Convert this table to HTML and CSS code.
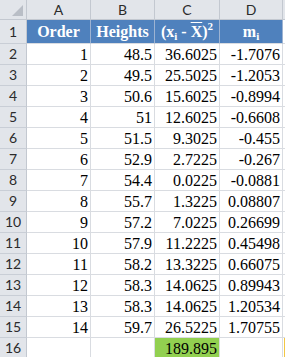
FILE: index.html
```html
<!DOCTYPE html>
<html lang="en">
<head>
    <meta charset="UTF-8">
    <title>Heights</title>
    <link rel="stylesheet" href="styles.css">
</head>
<body>
    <table class="sheet">
        <colgroup>
            <col class="c-row">
            <col class="c-a">
            <col class="c-b">
            <col class="c-c">
            <col class="c-d">
            <col class="c-e">
        </colgroup>
        <tr class="letters">
            <th class="corner"><span class="tri"></span></th>
            <th>A</th><th>B</th><th>C</th><th>D</th><th class="edge"></th>
        </tr>
        <tr class="head">
            <th class="num">1</th>
            <td>Order</td>
            <td>Heights</td>
            <td>(x<sub>i</sub> - <span class="bar">X</span>)<sup>2</sup></td>
            <td>m<sub>i</sub></td>
            <td class="edge"></td>
        </tr>
        <tr><th class="num">2</th><td>1</td><td>48.5</td><td>36.6025</td><td>-1.7076</td><td class="edge"></td></tr>
        <tr><th class="num">3</th><td>2</td><td>49.5</td><td>25.5025</td><td>-1.2053</td><td class="edge"></td></tr>
        <tr><th class="num">4</th><td>3</td><td>50.6</td><td>15.6025</td><td>-0.8994</td><td class="edge"></td></tr>
        <tr><th class="num">5</th><td>4</td><td>51</td><td>12.6025</td><td>-0.6608</td><td class="edge"></td></tr>
        <tr><th class="num">6</th><td>5</td><td>51.5</td><td>9.3025</td><td>-0.455</td><td class="edge"></td></tr>
        <tr><th class="num">7</th><td>6</td><td>52.9</td><td>2.7225</td><td>-0.267</td><td class="edge"></td></tr>
        <tr><th class="num">8</th><td>7</td><td>54.4</td><td>0.0225</td><td>-0.0881</td><td class="edge"></td></tr>
        <tr><th class="num">9</th><td>8</td><td>55.7</td><td>1.3225</td><td>0.08807</td><td class="edge"></td></tr>
        <tr><th class="num">10</th><td>9</td><td>57.2</td><td>7.0225</td><td>0.26699</td><td class="edge"></td></tr>
        <tr><th class="num">11</th><td>10</td><td>57.9</td><td>11.2225</td><td>0.45498</td><td class="edge"></td></tr>
        <tr><th class="num">12</th><td>11</td><td>58.2</td><td>13.3225</td><td>0.66075</td><td class="edge"></td></tr>
        <tr><th class="num">13</th><td>12</td><td>58.3</td><td>14.0625</td><td>0.89943</td><td class="edge"></td></tr>
        <tr><th class="num">14</th><td>13</td><td>58.3</td><td>14.0625</td><td>1.20534</td><td class="edge"></td></tr>
        <tr><th class="num">15</th><td>14</td><td>59.7</td><td>26.5225</td><td>1.70755</td><td class="edge"></td></tr>
        <tr><th class="num">16</th><td></td><td></td><td class="total">189.895</td><td></td><td class="edge picked"></td></tr>
    </table>
</body>
</html>
```

FILE: styles.css
```css
body {
    margin: 0;
    background: #ffffff;
    overflow: hidden;
}

.sheet {
    table-layout: fixed;
    border-collapse: separate;
    border-spacing: 0;
    width: 285px;
    font-family: "Liberation Serif", "Times New Roman", serif;
    font-size: 16px;
    color: #000000;
}

.c-row { width: 27px; }
.c-a { width: 64px; }
.c-b { width: 64px; }
.c-c { width: 65px; }
.c-d { width: 63px; }
.c-e { width: 2px; }

.sheet th,
.sheet td {
    box-sizing: border-box;
    padding: 0 2px 0 0;
    border-right: 1px solid #d9dce1;
    border-bottom: 1px solid #d9dce1;
    height: 21px;
    text-align: right;
    white-space: nowrap;
    overflow: hidden;
    line-height: 18px;
    vertical-align: bottom;
}

/* column letters and row numbers */
.letters th {
    height: 20px;
    background: #e2e5ea;
    font-family: Lato, "Liberation Sans", sans-serif;
    font-weight: normal;
    font-size: 14px;
    color: #2b2b2b;
    text-align: center;
    padding: 0;
    vertical-align: middle;
    border-right: 1px solid #c3c8d0;
    border-bottom: 1px solid #c3c8d0;
}

.sheet .num {
    background: #e2e5ea;
    font-family: Lato, "Liberation Sans", sans-serif;
    font-weight: normal;
    font-size: 14px;
    color: #2b2b2b;
    text-align: center;
    padding: 0;
    vertical-align: middle;
    border-right: 1px solid #c3c8d0;
    border-bottom: 1px solid #c9ced6;
}

.corner {
    position: relative;
}

.tri {
    position: absolute;
    right: 3px;
    bottom: 3px;
    width: 11px;
    height: 11px;
    background: #b9bec6;
    clip-path: polygon(100% 0, 100% 100%, 0 100%);
}

/* blue title row */
.head td {
    height: 24px;
    background: #4f81bd;
    color: #ffffff;
    font-weight: bold;
    text-align: center;
    padding: 0;
    vertical-align: middle;
    border-right: 1px solid #9db3d2;
    border-bottom: 1px solid #d9dce1;
}

.head .num {
    height: 24px;
}

.head .edge {
    background: #ffffff;
    border-right: none;
}

.head sub {
    font-size: 11px;
    vertical-align: -3px;
    line-height: 0;
}

.head sup {
    font-size: 11px;
    vertical-align: 7px;
    line-height: 0;
}

.bar {
    text-decoration: overline;
}

.sheet .edge {
    border-right: none;
    padding: 0;
}

.total {
    background: #92d050;
}

.sheet .picked {
    background: linear-gradient(to right, #ffffff 1px, #f2c744 1px);
}
```
